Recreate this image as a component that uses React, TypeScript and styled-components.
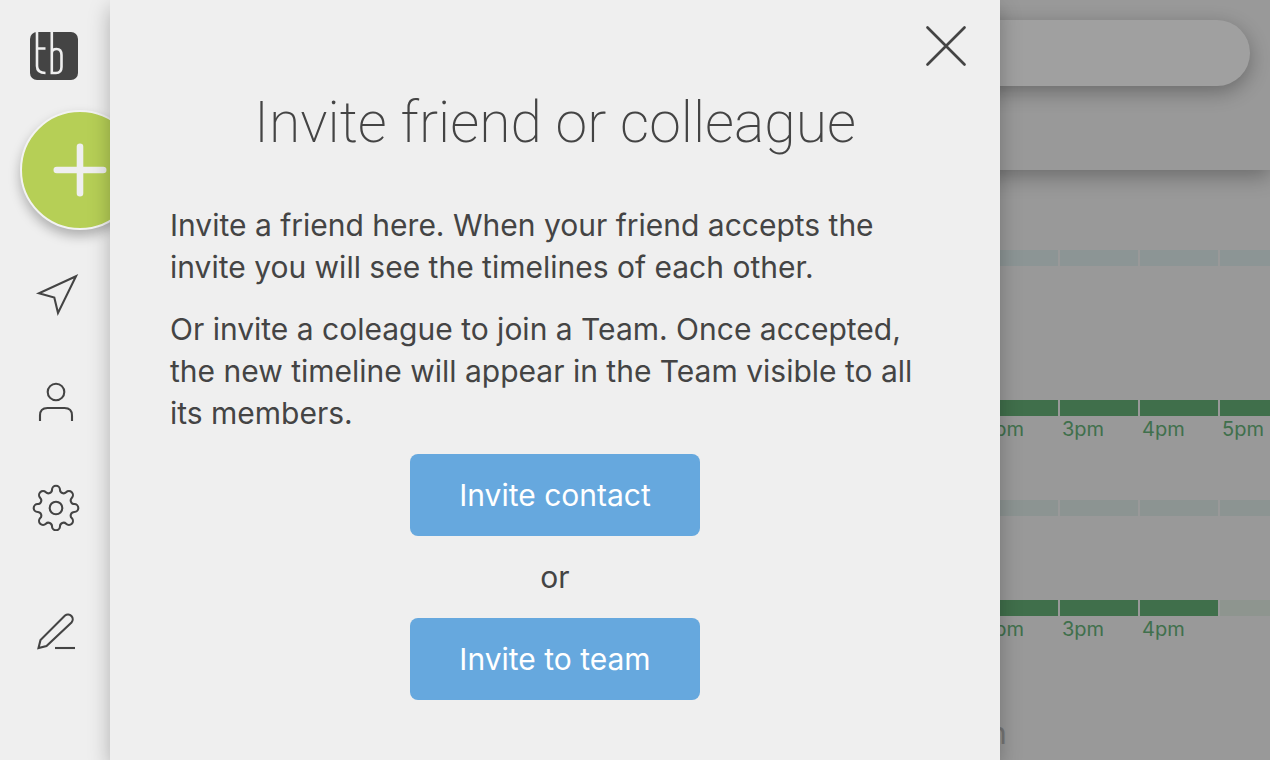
import React from "react";
import styled, { createGlobalStyle } from "styled-components";

const GlobalStyle = createGlobalStyle`
  * { box-sizing: border-box; }
  body {
    margin: 0;
    background: #efefef;
    color: #444;
    font-family: Inter, "Liberation Sans", sans-serif;
  }
  button { font: inherit; border: 0; padding: 0; cursor: pointer; }
`;

const Page = styled.div`
  display: grid;
  grid-template-columns: 110px minmax(0, 890px) minmax(270px, 1fr);
  min-height: 100vh;
  overflow: hidden;
`;

const Sidebar = styled.aside`
  display: flex;
  flex-direction: column;
  padding-top: 32px;
  min-width: 0;
`;

const LogoLink = styled.a`
  display: block;
  width: 48px;
  height: 48px;
  margin-left: 30px;
`;

const AddButton = styled.button`
  display: flex;
  align-items: center;
  justify-content: center;
  flex: none;
  width: 120px;
  height: 120px;
  margin: 30px 0 0 20px;
  border: 2px solid #f3f3f3;
  border-radius: 50%;
  background: #b6cf56;
  box-shadow: 0 6px 12px rgba(0, 0, 0, 0.27);
`;

const Nav = styled.nav`
  display: flex;
  flex-direction: column;
  gap: 58px;
  padding: 41px 0 0 32px;
`;

const NavButton = styled.button<{ $apart?: boolean }>`
  width: 48px;
  height: 48px;
  margin-top: ${(p) => (p.$apart ? 18 : 0)}px;
  background: none;
`;

const Drawing = styled.svg`
  display: block;
  fill: none;
  stroke: #444;
  stroke-width: 2.1;
`;

const Dialog = styled.section`
  position: relative;
  z-index: 2;
  padding: 86px 60px 60px;
  background: #efefef;
  box-shadow: 0 8px 20px rgba(0, 0, 0, 0.27);
`;

const CloseButton = styled.button`
  position: absolute;
  top: 22px;
  right: 30px;
  width: 48px;
  height: 48px;
  background: none;
`;

const Title = styled.h1`
  margin: 0 0 44px;
  font-family: Roboto, "Liberation Sans", sans-serif;
  font-size: 57px;
  line-height: 74px;
  font-weight: 200;
  text-align: center;
  white-space: nowrap;
`;

const Paragraph = styled.p`
  margin: 0 0 20px;
  font-size: 30px;
  line-height: 42px;
`;

const Actions = styled.div`
  display: flex;
  flex-direction: column;
  align-items: center;
  gap: 20px;
  font-size: 30px;
  line-height: 42px;
`;

const ActionButton = styled.button`
  min-width: 290px;
  padding: 20px;
  border-radius: 8px;
  background: #66a8de;
  color: #fff;
`;

const Backdrop = styled.main`
  position: relative;
  overflow: hidden;
  background: #efefef;
`;

const Scrim = styled.div`
  position: absolute;
  inset: 0;
  background: rgba(0, 0, 0, 0.36);
`;

const Board = styled.div`
  margin-left: -20px;
`;

const TopBar = styled.header`
  height: 170px;
  padding: 20px 20px 0 0;
  box-shadow: 0 6px 20px rgba(0, 0, 0, 0.3);
`;

const Search = styled.input`
  display: block;
  width: 100%;
  height: 66px;
  border: 0;
  border-radius: 0 33px 33px 0;
  background: #fbfbfb;
  box-shadow: 0 6px 20px rgba(0, 0, 0, 0.3);
`;

const Rows = styled.div`
  padding-top: 80px;
`;

const Row = styled.div<{ $height: number }>`
  display: flex;
  height: ${(p) => p.$height}px;
`;

const Hour = styled.div<{ $fill: string }>`
  flex: none;
  width: 80px;
  padding-left: 2px;
  color: #64b078;
  font-size: 20px;
  line-height: 26px;

  &::before {
    content: "";
    display: block;
    width: 78px;
    height: 16px;
    margin-left: -2px;
    background: ${(p) => p.$fill};
  }
`;

const Caption = styled.div`
  padding: 13px 0 0 9px;
  color: #b8b8b8;
  font-size: 30px;
  line-height: 40px;
`;

const GREEN = "#64ae76";
const MIST = "#dce8e4";
const SKY = "#dce9ea";
const SAGE = "#deeae0";

const rows = [
  { height: 150, fills: [SKY, SKY, SKY, SKY], labels: [] as string[] },
  { height: 100, fills: [GREEN, GREEN, GREEN, GREEN], labels: ["2pm", "3pm", "4pm", "5pm"] },
  { height: 100, fills: [MIST, MIST, MIST, MIST], labels: [] as string[] },
  { height: 100, fills: [GREEN, GREEN, GREEN, SAGE], labels: ["2pm", "3pm", "4pm"] },
];

/* Eight round teeth joined by round valleys, as one closed run of arcs. */
function gearPath(cx: number, cy: number) {
  const at = (deg: number) => {
    const a = (deg * Math.PI) / 180;
    return `${(cx + 18.73 * Math.sin(a)).toFixed(2)} ${(cy - 18.73 * Math.cos(a)).toFixed(2)}`;
  };
  let d = `M${at(-12.33)}`;
  for (let i = 0; i < 8; i++) {
    d += `A4 4 0 0 1 ${at(i * 45 + 12.33)}A3.58 3.58 0 0 0 ${at(i * 45 + 32.67)}`;
  }
  return d + "Z";
}

const Icon = ({ children }: { children: React.ReactNode }) => (
  <Drawing width="48" height="48" viewBox="0 0 48 48" aria-hidden="true">
    {children}
  </Drawing>
);

export default function App() {
  return (
    <>
      <GlobalStyle />
      <Page>
        <Sidebar>
          <LogoLink href="#" aria-label="Home">
            <Icon>
              <rect width="48" height="48" rx="7" fill="#444" stroke="none" />
              <g stroke="#efefef" strokeWidth="2.6">
                <path d="M7 0V34Q7 41 15.5 41M7 16.5H15.5" />
                <path d="M21.8 0V41H26Q31.500 41 31.500 35V23Q31.500 17 26.500 17Q22 17 21.800 21" />
              </g>
            </Icon>
          </LogoLink>
          <AddButton aria-label="Add">
            <Drawing width="56" height="56" viewBox="0 0 56 56" aria-hidden="true">
              <path d="M28 4.8V51.2M4.8 28H51.2" stroke="#efefef" strokeWidth="6.6" strokeLinecap="round" />
            </Drawing>
          </AddButton>
          <Nav>
            <NavButton aria-label="Send">
              <Icon>
                <path d="M44 5.2L7 22.3L22.300 26.500L26 42Z" />
              </Icon>
            </NavButton>
            <NavButton aria-label="People">
              <Icon>
                <circle cx="24" cy="15" r="8.300" />
                <path d="M8 44V38.500Q8 31 15.500 31H32.500Q40 31 40 38.500V44" />
              </Icon>
            </NavButton>
            <NavButton aria-label="Settings">
              <Icon>
                <path d={gearPath(24, 25)} />
                <circle cx="24" cy="25" r="6.300" />
              </Icon>
            </NavButton>
            <NavButton $apart aria-label="Edit">
              <Icon>
                <path d="M6.500 41L8.500 33L33 8.500A4.800 4.800 0 0 1 39.500 15.500L14.500 39Z" />
                <path d="M23 41H43" />
              </Icon>
            </NavButton>
          </Nav>
        </Sidebar>

        <Dialog role="dialog" aria-labelledby="invite-title">
          <CloseButton aria-label="Close">
            <Icon>
              <path d="M5.5 5.5L42.5 42.5M42.5 5.5L5.5 42.5" strokeWidth="2.7" strokeLinecap="round" />
            </Icon>
          </CloseButton>
          <Title id="invite-title">Invite friend or colleague</Title>
          <Paragraph>
            Invite a friend here. When your friend accepts the invite you will see the timelines of each other.
          </Paragraph>
          <Paragraph>
            Or invite a coleague to join a Team. Once accepted, the new timeline will appear in the Team visible to
            all its members.
          </Paragraph>
          <Actions>
            <ActionButton>Invite contact</ActionButton>
            <span>or</span>
            <ActionButton>Invite to team</ActionButton>
          </Actions>
        </Dialog>

        <Backdrop>
          <Board>
            <TopBar>
              <Search type="search" aria-label="Search" />
            </TopBar>
            <Rows>
              {rows.map((row, r) => (
                <Row key={r} $height={row.height}>
                  {row.fills.map((fill, i) => (
                    <Hour key={i} $fill={fill}>
                      {row.labels[i]}
                    </Hour>
                  ))}
                </Row>
              ))}
            </Rows>
            <Caption>n</Caption>
          </Board>
          <Scrim />
        </Backdrop>
      </Page>
    </>
  );
}
